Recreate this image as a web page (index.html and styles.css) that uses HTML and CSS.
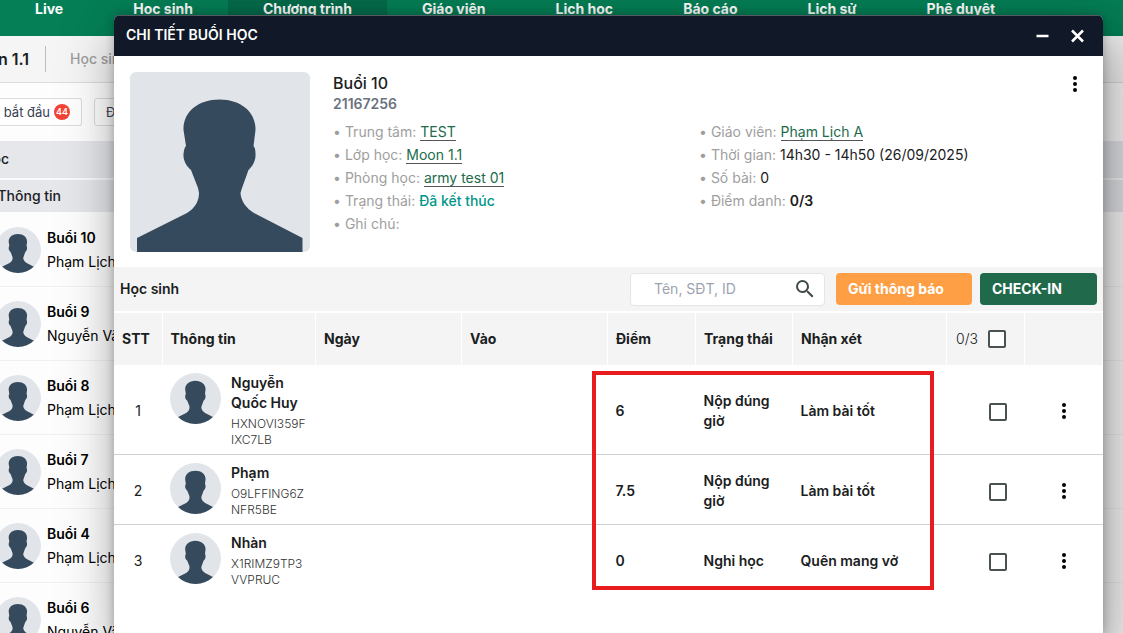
FILE: index.html
```html
<!DOCTYPE html>
<html lang="vi">
<head>
<meta charset="utf-8">
<title>Chi tiết buổi học</title>
<link rel="stylesheet" href="styles.css">
</head>
<body>
<svg class="defs" aria-hidden="true">
  <symbol id="person" viewBox="0 0 180 180">
    <rect width="180" height="180" fill="#e1e5ea"/>
    <path fill="#364a5e" d="M7 180V166L57 141C65 136 69 129 69 121L68 116L61 98C56 94 53 88 53.500 82Q54 76 56 74L53.500 58C53 40 68 27.500 89.500 27.500S126 40 125.500 58L123.500 74Q125.500 76 125.500 82C126 88 123 94 118.500 98L112 116L110.500 121C111 129 116 136 124 141L172.500 166V180Z"/>
  </symbol>
  <symbol id="dots" viewBox="0 0 24 24">
    <path d="M12 16a2 2 0 1 1 0 4 2 2 0 0 1 0-4m0-6a2 2 0 1 1 0 4 2 2 0 0 1 0-4m0-6a2 2 0 1 1 0 4 2 2 0 0 1 0-4"/>
  </symbol>
</svg>

<div class="page">
  <nav class="nav">
    <a href="#">Live</a>
    <a href="#">Học sinh</a>
    <a href="#" class="active">Chương trình</a>
    <a href="#">Giáo viên</a>
    <a href="#">Lịch học</a>
    <a href="#">Báo cáo</a>
    <a href="#">Lịch sử</a>
    <a href="#">Phê duyệt</a>
  </nav>
  <header class="crumbs">
    <div class="crumb-title">n 1.1</div>
    <a class="crumb-link" href="#">Học sinh</a>
  </header>
  <div class="filters">
    <button class="chip chip-first">bắt đầu <span class="count">44</span></button>
    <button class="chip">Đang</button>
  </div>
  <div class="list-head"><span class="edge edge-short">ọc</span></div>
  <div class="list-head list-sub"><span class="edge">Thông tin</span></div>
  <ul class="lessons">
    <li><svg><use href="#person"/></svg><div><b>Buổi 10</b><span>Phạm Lịch</span></div></li>
    <li><svg><use href="#person"/></svg><div><b>Buổi 9</b><span>Nguyễn Văn</span></div></li>
    <li><svg><use href="#person"/></svg><div><b>Buổi 8</b><span>Phạm Lịch</span></div></li>
    <li><svg><use href="#person"/></svg><div><b>Buổi 7</b><span>Phạm Lịch</span></div></li>
    <li><svg><use href="#person"/></svg><div><b>Buổi 4</b><span>Phạm Lịch</span></div></li>
    <li><svg><use href="#person"/></svg><div><b>Buổi 6</b><span>Nguyễn Văn</span></div></li>
  </ul>
</div>

<section class="modal" role="dialog" aria-labelledby="modal-title">
  <header class="modal-head">
    <h1 id="modal-title">CHI TIẾT BUỔI HỌC</h1>
    <button class="icon-btn" aria-label="Thu nhỏ"><svg width="15" height="15" viewBox="0 0 15 15"><path d="M1.500 8h12" stroke="#fff" stroke-width="2.500"/></svg></button>
    <button class="icon-btn" aria-label="Đóng"><svg width="15" height="15" viewBox="0 0 15 15"><path d="M2 2.500l11 11M13 2.500L2 13.500" stroke="#fff" stroke-width="2.500"/></svg></button>
  </header>

  <div class="info">
    <svg class="photo"><use href="#person"/></svg>
    <div class="details">
      <h2>Buổi 10</h2>
      <div class="code">21167256</div>
      <div class="facts">
        <ul>
          <li>Trung tâm: <a href="#">TEST</a></li>
          <li>Lớp học: <a href="#">Moon 1.1</a></li>
          <li>Phòng học: <a href="#">army test 01</a></li>
          <li>Trạng thái: <span class="done">Đã kết thúc</span></li>
          <li>Ghi chú:</li>
        </ul>
        <ul>
          <li>Giáo viên: <a href="#">Phạm Lịch A</a></li>
          <li>Thời gian: <span class="value">14h30 - 14h50 (26/09/2025)</span></li>
          <li>Số bài: <span class="value">0</span></li>
          <li>Điểm danh: <strong class="value">0/3</strong></li>
        </ul>
      </div>
    </div>
    <button class="icon-btn more" aria-label="Tùy chọn"><svg><use href="#dots"/></svg></button>
  </div>

  <div class="toolbar">
    <h3>Học sinh</h3>
    <label class="search">
      <input type="text" placeholder="Tên, SĐT, ID" aria-label="Tên, SĐT, ID">
      <svg viewBox="0 0 24 24"><path fill="#404b46" d="M9.500 3A6.500 6.500 0 0 1 16 9.500c0 1.610-.59 3.090-1.560 4.230l.27.270h.79l5 5-1.500 1.500-5-5v-.79l-.27-.27A6.516 6.516 0 0 1 9.500 16a6.500 6.500 0 0 1 0-13m0 2C7 5 5 7 5 9.500S7 14 9.500 14 14 12 14 9.500 12 5 9.500 5"/></svg>
    </label>
    <button class="btn notify">Gửi thông báo</button>
    <button class="btn checkin">CHECK-IN</button>
  </div>

  <div class="table-wrap">
    <table>
      <colgroup>
        <col class="c-no"><col><col class="c-time"><col class="c-time"><col class="c-score"><col class="c-state"><col class="c-note"><col class="c-pick"><col class="c-pick">
      </colgroup>
      <thead>
        <tr>
          <th>STT</th><th>Thông tin</th><th>Ngày</th><th>Vào</th><th>Điểm</th><th>Trạng thái</th><th>Nhận xét</th>
          <th class="check"><label class="all">0/3 <input type="checkbox"></label></th><th></th>
        </tr>
      </thead>
      <tbody>
        <tr>
          <td class="no">1</td>
          <td><div class="student"><svg><use href="#person"/></svg><div><b>Nguyễn Quốc Huy</b><span>HXNOVI359FIXC7LB</span></div></div></td>
          <td></td><td></td><td>6</td><td>Nộp đúng giờ</td><td>Làm bài tốt</td>
          <td class="pick check"><input type="checkbox" aria-label="Chọn Nguyễn Quốc Huy"></td>
          <td class="pick"><button class="icon-btn" aria-label="Tùy chọn"><svg><use href="#dots"/></svg></button></td>
        </tr>
        <tr>
          <td class="no">2</td>
          <td><div class="student"><svg><use href="#person"/></svg><div><b>Phạm</b><span>O9LFFING6ZNFR5BE</span></div></div></td>
          <td></td><td></td><td>7.5</td><td>Nộp đúng giờ</td><td>Làm bài tốt</td>
          <td class="pick check"><input type="checkbox" aria-label="Chọn Phạm"></td>
          <td class="pick"><button class="icon-btn" aria-label="Tùy chọn"><svg><use href="#dots"/></svg></button></td>
        </tr>
        <tr>
          <td class="no">3</td>
          <td><div class="student"><svg><use href="#person"/></svg><div><b>Nhàn</b><span>X1RIMZ9TP3VVPRUC</span></div></div></td>
          <td></td><td></td><td>0</td><td>Nghỉ học</td><td>Quên mang vở</td>
          <td class="pick check"><input type="checkbox" aria-label="Chọn Nhàn"></td>
          <td class="pick"><button class="icon-btn" aria-label="Tùy chọn"><svg><use href="#dots"/></svg></button></td>
        </tr>
      </tbody>
    </table>
    <div class="highlight"></div>
  </div>
</section>
</body>
</html>
```

FILE: styles.css
```css
* { box-sizing: border-box; }
body {
  margin: 0;
  height: 100vh;
  overflow: hidden;
  background: #fff;
  color: #1a201d;
  font: 14px/20px Inter, sans-serif;
}
h1, h2, h3, ul { margin: 0; padding: 0; }
ul { list-style: none; }
button, input { font: inherit; }
.defs { position: absolute; width: 0; height: 0; }
.page { height: 100vh; overflow: hidden; background: #fdfdfd; }

.nav { display: flex; height: 36px; background: #047f56; }
.nav a {
  padding: 0 35px;
  color: #fff;
  font-weight: 700;
  line-height: 18px;
  white-space: nowrap;
  text-decoration: none;
}
.nav .active { background: #046c4b; }

.crumbs {
  display: flex;
  align-items: center;
  height: 47px;
  background: #f5f5f5;
  border-bottom: 1px solid #dcdcdc;
}
.crumb-title {
  display: flex;
  justify-content: flex-end;
  width: 46px;
  padding-right: 16px;
  border-right: 1px solid #bdbdbd;
  font-size: 16px;
  font-weight: 600;
  line-height: 26px;
  white-space: nowrap;
}
.crumb-link { padding-left: 24px; color: #9e9e9e; font-weight: 500; text-decoration: none; }

.filters { display: flex; gap: 12px; padding: 15px 0; }
.chip {
  display: flex;
  align-items: center;
  gap: 4px;
  height: 28px;
  padding: 0 11px;
  background: #fff;
  border: 1px solid #dcdcdc;
  border-radius: 3px;
  color: #374151;
  font-size: 13px;
  white-space: nowrap;
}
.chip-first { justify-content: flex-end; width: 82px; padding-left: 0; border-left: 0; border-radius: 0 3px 3px 0; }
.count {
  flex: none;
  width: 16px;
  border-radius: 8px;
  background: #f44336;
  color: #fff;
  font-size: 9px;
  font-weight: 600;
  line-height: 16px;
  text-align: center;
}
.list-head { height: 37px; background: #e5e7eb; font-weight: 500; line-height: 36px; }
.list-sub { height: 34px; border-top: 2px solid #fafafa; line-height: 32px; }
.edge { display: flex; justify-content: flex-end; width: 61px; white-space: nowrap; }
.edge-short { width: 9px; }

.lessons { padding-top: 1px; }
.lessons li {
  display: flex;
  align-items: center;
  gap: 6px;
  height: 74px;
  border-bottom: 1px solid #f1f1f1;
  color: #000;
}
.lessons svg { flex: none; width: 46px; height: 46px; margin-left: -5px; border-radius: 50%; }
.lessons b, .lessons span { display: block; line-height: 24px; white-space: nowrap; }
.lessons b { font-weight: 600; }

.modal {
  position: absolute;
  inset: 15px 20px 0 114px;
  overflow: hidden;
  background: #fff;
  border-radius: 6px 6px 0 0;
  box-shadow: 0 0 10px rgba(0,0,0,.24), 6px 38px 38px 3px rgba(0,0,0,.16), 10px 16px 60px 10px rgba(0,0,0,.22);
}
.modal-head {
  display: flex;
  align-items: center;
  gap: 20px;
  height: 41px;
  padding: 0 18px 2px 12px;
  background: #111827;
  border-top: 1px solid #555a62;
  color: #fff;
}
.modal-head h1 { flex: 1; font-size: 14px; font-weight: 600; }
.icon-btn { display: inline-flex; padding: 0; border: 0; background: none; }
.icon-btn svg { width: 24px; height: 24px; }
.modal-head svg { width: 15px; height: 15px; }

.info { display: flex; align-items: flex-start; gap: 23px; padding: 16px 16px 15px; }
.photo { flex: none; width: 180px; height: 180px; border-radius: 6px; }
.details { flex: 1; }
.details h2 { font-size: 16px; font-weight: 500; line-height: 22px; }
.code { color: #6b7280; font-weight: 600; line-height: 20px; }
.facts { display: grid; grid-template-columns: 366px 1fr; padding-top: 6px; }
.facts li { color: #9e9e9e; line-height: 23px; }
.facts li::before { content: "•"; padding-right: 4px; }
.facts a { color: #216b4b; text-decoration: none; border-bottom: 1px solid #555; }
.facts .done { color: #009688; font-weight: 500; }
.facts .value { color: #1a201d; }
.facts strong { font-weight: 600; }
.more svg { fill: #000; }

.toolbar { display: flex; align-items: center; height: 44px; padding: 0 6px; background: #f4f4f4; }
.toolbar h3 { flex: 1; font-size: 14px; font-weight: 600; }
.search {
  display: flex;
  align-items: center;
  width: 195px;
  height: 33px;
  margin-right: 11px;
  padding: 0 7px 0 23px;
  background: #fff;
  border: 1px solid #e5e5e5;
  border-radius: 4px;
}
.search input { flex: 1; min-width: 0; padding: 0; border: 0; outline: 0; background: none; }
.search input::placeholder { color: #9ca3af; opacity: 1; }
.search svg { width: 24px; height: 24px; }
.btn { height: 32px; padding: 0 12px; border: 0; border-radius: 4px; color: #fff; font-weight: 700; text-align: left; white-space: nowrap; }
.notify { width: 136px; margin-right: 8px; background: #ff9f45; }
.checkin { width: 117px; background: #21694b; }

.table-wrap { position: relative; }
table { width: 100%; table-layout: fixed; border-collapse: collapse; }
.c-no { width: 48px; }
.c-time { width: 146px; }
.c-score { width: 88px; }
.c-state { width: 97px; }
.c-note { width: 154px; }
.c-pick { width: 78px; }
th {
  height: 53px;
  padding: 0 8px;
  background: #f4f4f4;
  border: solid #fff;
  border-width: 2px 1px 0 0;
  font-weight: 700;
  text-align: left;
}
td { height: 70px; padding: 8px 8px 6px; border-bottom: 1px solid #cfd1d0; font-weight: 600; }
tr:last-child td { border-bottom: 0; }
.no { font-weight: 400; text-align: center; }
.pick { text-align: center; }
.pick > * { vertical-align: middle; }
.check { padding-right: 18px; text-align: right; }
.student { display: flex; gap: 10px; }
.student svg { flex: none; width: 51px; height: 51px; border-radius: 50%; }
.student div { flex: 1; min-width: 0; }
.student b, .student span { display: block; }
.student b { font-weight: 600; }
.student span { padding-top: 3px; color: #333; font-size: 12px; font-weight: 300; line-height: 16px; overflow-wrap: anywhere; }
.all { display: flex; align-items: center; justify-content: flex-end; gap: 10px; font-weight: 300; }
input[type="checkbox"] {
  appearance: none;
  width: 18px;
  height: 18px;
  margin: 0;
  border: 2px solid #4a534f;
  border-radius: 2px;
  background: #fff;
}
.highlight {
  position: absolute;
  top: 60px;
  right: 169px;
  width: 342px;
  height: 219px;
  border: 4px solid #e81c1f;
  pointer-events: none;
}
```
